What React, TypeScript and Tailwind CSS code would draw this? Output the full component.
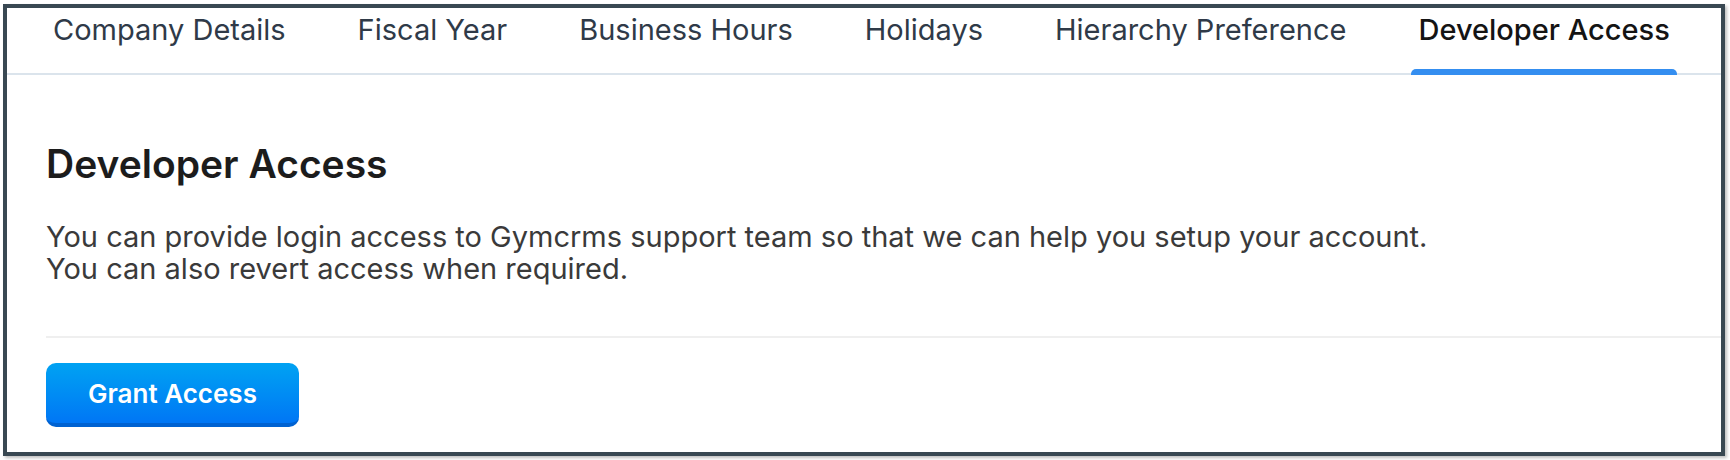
import React from "react";

const tabs = [
  "Company Details",
  "Fiscal Year",
  "Business Hours",
  "Holidays",
  "Hierarchy Preference",
  "Developer Access",
];

function TabBar({ active }: { active: string }) {
  return (
    <div className="flex h-[67px] gap-[58px] border-b-2 border-[#dbe4ec] pl-[39px]">
      {tabs.map((tab) => {
        const isActive = tab === active;
        return (
          <div
            key={tab}
            className={
              "relative h-full whitespace-nowrap px-[7px] pt-[4px] text-[29px] leading-[36px] " +
              (isActive ? "font-medium text-[#141414]" : "text-[#2f3a48]")
            }
          >
            {tab}
            {isActive && (
              <span className="absolute -bottom-[2px] left-0 right-0 h-[6px] rounded-t-[5px] bg-[#348ef0]" />
            )}
          </div>
        );
      })}
    </div>
  );
}

export default function App() {
  return (
    <div
      className="h-[460px] w-[1730px] bg-white pt-[4px] pl-[3px] pr-[5px] pb-[4px]"
      style={{ fontFamily: "Inter, 'Noto Sans', sans-serif" }}
    >
      <div className="flex h-full flex-col border-4 border-[#394852] bg-white shadow-[2px_2px_3px_rgba(0,0,0,0.25)]">
        <TabBar active="Developer Access" />

        <div className="flex flex-1 flex-col pl-[39px]">
          <h2 className="mt-[67px] text-[39px] font-semibold leading-[44px] text-[#1c1c1c]">
            Developer Access
          </h2>
          <p className="mt-[35px] text-[29px] leading-[32px] text-[#3a3a3a]">
            You can provide login access to Gymcrms support team so that we can help you setup your account.
            <br />
            You can also revert access when required.
          </p>

          <div className="mt-[51px] border-t-2 border-[#efefef]" />

          <div className="mt-[25px]">
            <button className="h-[64px] w-[253px] rounded-[10px] border-b-4 border-[#0062d1] bg-gradient-to-b from-[#00a2f2] to-[#0076f5] text-[26px] font-semibold text-white">
              Grant Access
            </button>
          </div>
        </div>
      </div>
    </div>
  );
}
